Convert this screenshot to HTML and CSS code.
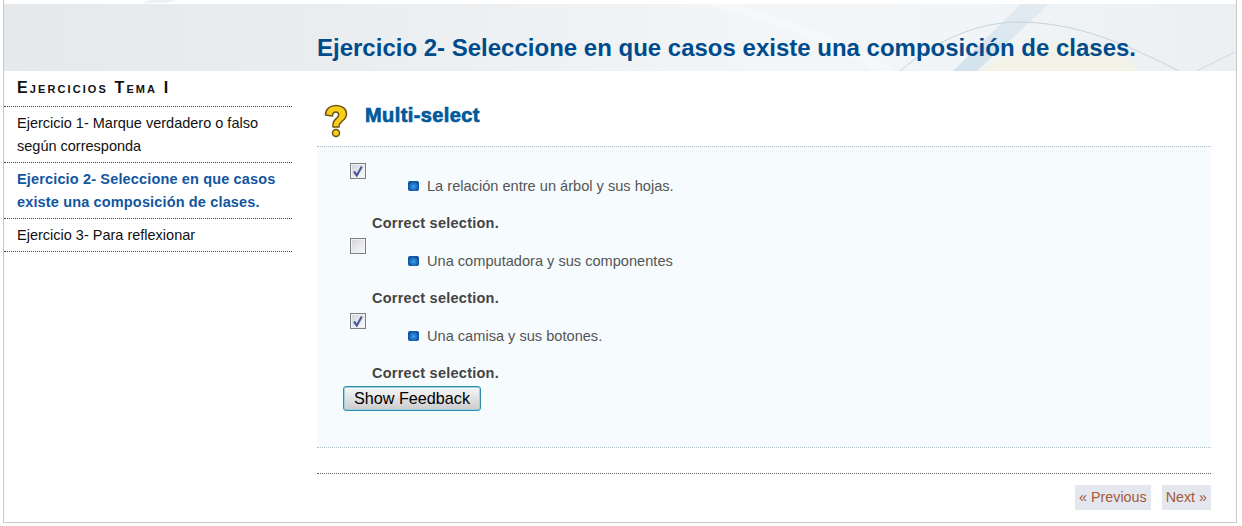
FILE: index.html
```html
<!DOCTYPE html>
<html lang="es">
<head>
<meta charset="utf-8">
<title>Ejercicio 2</title>
<link rel="stylesheet" href="styles.css">
</head>
<body>
<div class="page">
  <svg class="topdeco" width="1232" height="3" viewBox="0 0 1232 3" aria-hidden="true"><path d="M146 0h26l-8 3h-26z" fill="#eef1f4"/></svg>
  <header class="banner">
    <svg class="deco" width="1232" height="67" viewBox="0 0 1232 67" aria-hidden="true">
      <defs>
        <linearGradient id="sheen" x1="0" x2="1" y1="0" y2="0">
          <stop offset="0" stop-color="#e6e9ec"/>
          <stop offset=".3" stop-color="#ebeef0"/>
          <stop offset=".62" stop-color="#f3f5f7"/>
          <stop offset=".78" stop-color="#f2f5f7"/>
          <stop offset="1" stop-color="#ecefF1"/>
        </linearGradient>
        <linearGradient id="band" x1="0" x2="0" y1="0" y2="1">
          <stop offset="0" stop-color="#e3ebf1"/>
          <stop offset="1" stop-color="#d3e2ec"/>
        </linearGradient>
      </defs>
      <rect width="1232" height="67" fill="url(#sheen)"/>
      <path d="M700 0c70 18 130 40 170 67h20C850 38 780 14 730 0z" fill="#f7f8fa"/>
      <path d="M975 67c20-14 50-28 95-30 30 6 55 16 66 30z" fill="#f3f3e8"/>
      <path d="M1017 0h28L973 67h-24z" fill="url(#band)"/>
      <path d="M896 67C930 38 970 19 1013 18c62 0 112 24 162 49" fill="none" stroke="#c6d4dd" stroke-width="1"/>
      <path d="M1193 67l38-19" fill="none" stroke="#cdd8df" stroke-width="1"/>
    </svg>
    <h1 class="title">Ejercicio 2- Seleccione en que casos existe una composición de clases.</h1>
  </header>
  <div class="content">
    <nav class="sidebar">
      <h2 class="side-title">Ejercicios Tema I</h2>
      <a class="side-link">Ejercicio 1- Marque verdadero o falso según corresponda</a>
      <a class="side-link side-current">Ejercicio 2- Seleccione en que casos existe una composición de clases.</a>
      <a class="side-link">Ejercicio 3- Para reflexionar</a>
    </nav>
    <main class="main">
      <div class="idevice-head">
        <svg class="qicon" width="24" height="34" viewBox="0 0 24 34" aria-hidden="true">
          <path d="M1.500 11C1.500 5 6 1.500 12 1.500c6.500 0 10.500 3.500 10.500 8.500 0 4-2.500 5.800-5 7.800-2 1.600-2.500 2.700-2.500 5.200H9c-.5-4.500 1-6.500 3.200-8.300 1.600-1.300 2.500-2.300 2.500-3.900 0-1.800-1.100-2.800-2.900-2.800-2.300 0-3.300 1.500-3.300 4z" fill="#f8cf1c" stroke="#6e5410" stroke-width="1.500" stroke-linejoin="round"/>
          <circle cx="12" cy="29" r="3.500" fill="#f8cf1c" stroke="#6e5410" stroke-width="1.500"/>
        </svg>
        <h2 class="idevice-title">Multi-select</h2>
      </div>
      <section class="box">
        <div class="option">
          <span class="check"><svg width="14" height="14" viewBox="0 0 14 14" aria-hidden="true"><path d="M3 7.500l2.800 4L10.800 2.500" fill="none" stroke="#4a5a9a" stroke-width="2.200"/></svg></span>
          <div class="answer"><span class="bullet"></span>La relación entre un árbol y sus hojas.</div>
          <div class="verdict">Correct selection.</div>
        </div>
        <div class="option">
          <span class="check"></span>
          <div class="answer"><span class="bullet"></span>Una computadora y sus componentes</div>
          <div class="verdict">Correct selection.</div>
        </div>
        <div class="option">
          <span class="check"><svg width="14" height="14" viewBox="0 0 14 14" aria-hidden="true"><path d="M3 7.500l2.800 4L10.800 2.500" fill="none" stroke="#4a5a9a" stroke-width="2.200"/></svg></span>
          <div class="answer"><span class="bullet"></span>Una camisa y sus botones.</div>
          <div class="verdict">Correct selection.</div>
        </div>
        <button class="feedback" type="button">Show Feedback</button>
      </section>
      <div class="pager">
        <a class="pager-link">« Previous</a>
        <a class="pager-link">Next »</a>
      </div>
    </main>
  </div>
</div>
</body>
</html>
```
FILE: styles.css
```css
html, body { margin: 0; padding: 0; background: #fff; }
body { font-family: "Liberation Sans", Arial, sans-serif; color: #444; }
.page {
  position: relative;
  width: 1232px;
  height: 519px;
  margin-left: 3px;
  padding-top: 3px;
  border-left: 1px solid #c8c8c8;
  border-right: 1px solid #c8c8c8;
  border-bottom: 1px solid #c8c8c8;
}
.topdeco { position: absolute; left: 0; top: 0; }
.banner {
  position: relative;
  height: 67px;
  margin-top: 1px;
  display: flex;
  align-items: flex-end;
  padding-left: 313px;
  box-sizing: border-box;
}
.deco { position: absolute; left: 0; top: 0; }
.title {
  position: relative;
  margin: 0 0 9px;
  font-size: 24px;
  line-height: 28px;
  font-weight: bold;
  color: #004b8c;
}
.content { display: flex; }
.sidebar { width: 288px; margin-right: 25px; flex: none; }
.side-title {
  margin: 0;
  height: 36px;
  padding: 7px 0 0 13px;
  box-sizing: border-box;
  font-size: 16px;
  line-height: 20px;
  font-weight: bold;
  font-variant: small-caps;
  letter-spacing: 2.1px;
  color: #111;
  border-bottom: 1px dotted #2a4a5a;
}
.side-link {
  display: block;
  padding: 5px 13px 4px;
  font-size: 14.5px;
  line-height: 23px;
  color: #111;
  border-bottom: 1px dotted #2a4a5a;
}
.side-current { color: #11569f; font-weight: bold; letter-spacing: .15px; }
.main { width: 894px; flex: none; }
.idevice-head { display: flex; align-items: flex-start; height: 75px; box-sizing: border-box; padding: 33px 0 0 7px; }
.qicon { flex: none; }
.idevice-title {
  margin: -1px 0 0 17px;
  font-size: 20px;
  line-height: 24px;
  font-weight: bold;
  letter-spacing: .4px;
  color: #005a9c;
  -webkit-text-stroke: .7px #005a9c;
}
.box {
  height: 302px;
  box-sizing: border-box;
  padding: 16px 0 0 26px;
  background: #f6fbfe;
  border-top: 1px dotted #aebfc8;
  border-bottom: 1px dotted #aebfc8;
}
.option { height: 75px; }
.check {
  display: flex;
  align-items: center;
  justify-content: center;
  width: 14px;
  height: 14px;
  margin-left: 7px;
  border: 1px solid #808080;
  background: linear-gradient(135deg, #d4d4d8, #fbfbfd);
  box-shadow: inset 0 0 0 1px #f0f0f4;
}
.answer {
  display: flex;
  align-items: center;
  margin: -2px 0 0 65px;
  font-size: 14.6px;
  line-height: 18px;
  color: #555;
}
.bullet {
  width: 11px;
  height: 10px;
  margin-right: 8px;
  border-radius: 2px;
  background: radial-gradient(circle at 50% 55%, #38a0ee, #0d4a9c 75%);
}
.verdict {
  margin: 19px 0 0 29px;
  font-size: 14.5px;
  line-height: 18px;
  font-weight: bold;
  letter-spacing: .25px;
  color: #444;
}
.feedback {
  display: block;
  width: 138px;
  height: 25px;
  margin: -2px 0 0 0;
  padding: 0;
  font-family: "Liberation Sans", Arial, sans-serif;
  font-size: 16.2px;
  color: #000;
  border: 1px solid #2f8fb0;
  border-radius: 3px;
  background: linear-gradient(#f8f8f8, #cbcbcb);
  box-shadow: inset 0 0 0 1px #9fcfe0;
}
.pager {
  display: flex;
  justify-content: flex-end;
  gap: 11px;
  margin-top: 25px;
  padding-top: 11px;
  border-top: 1px dotted #666;
}
.pager-link {
  padding: 0 4px;
  font-size: 14.3px;
  line-height: 25px;
  color: #a5583a;
  background: #e4e8ee;
}
```
